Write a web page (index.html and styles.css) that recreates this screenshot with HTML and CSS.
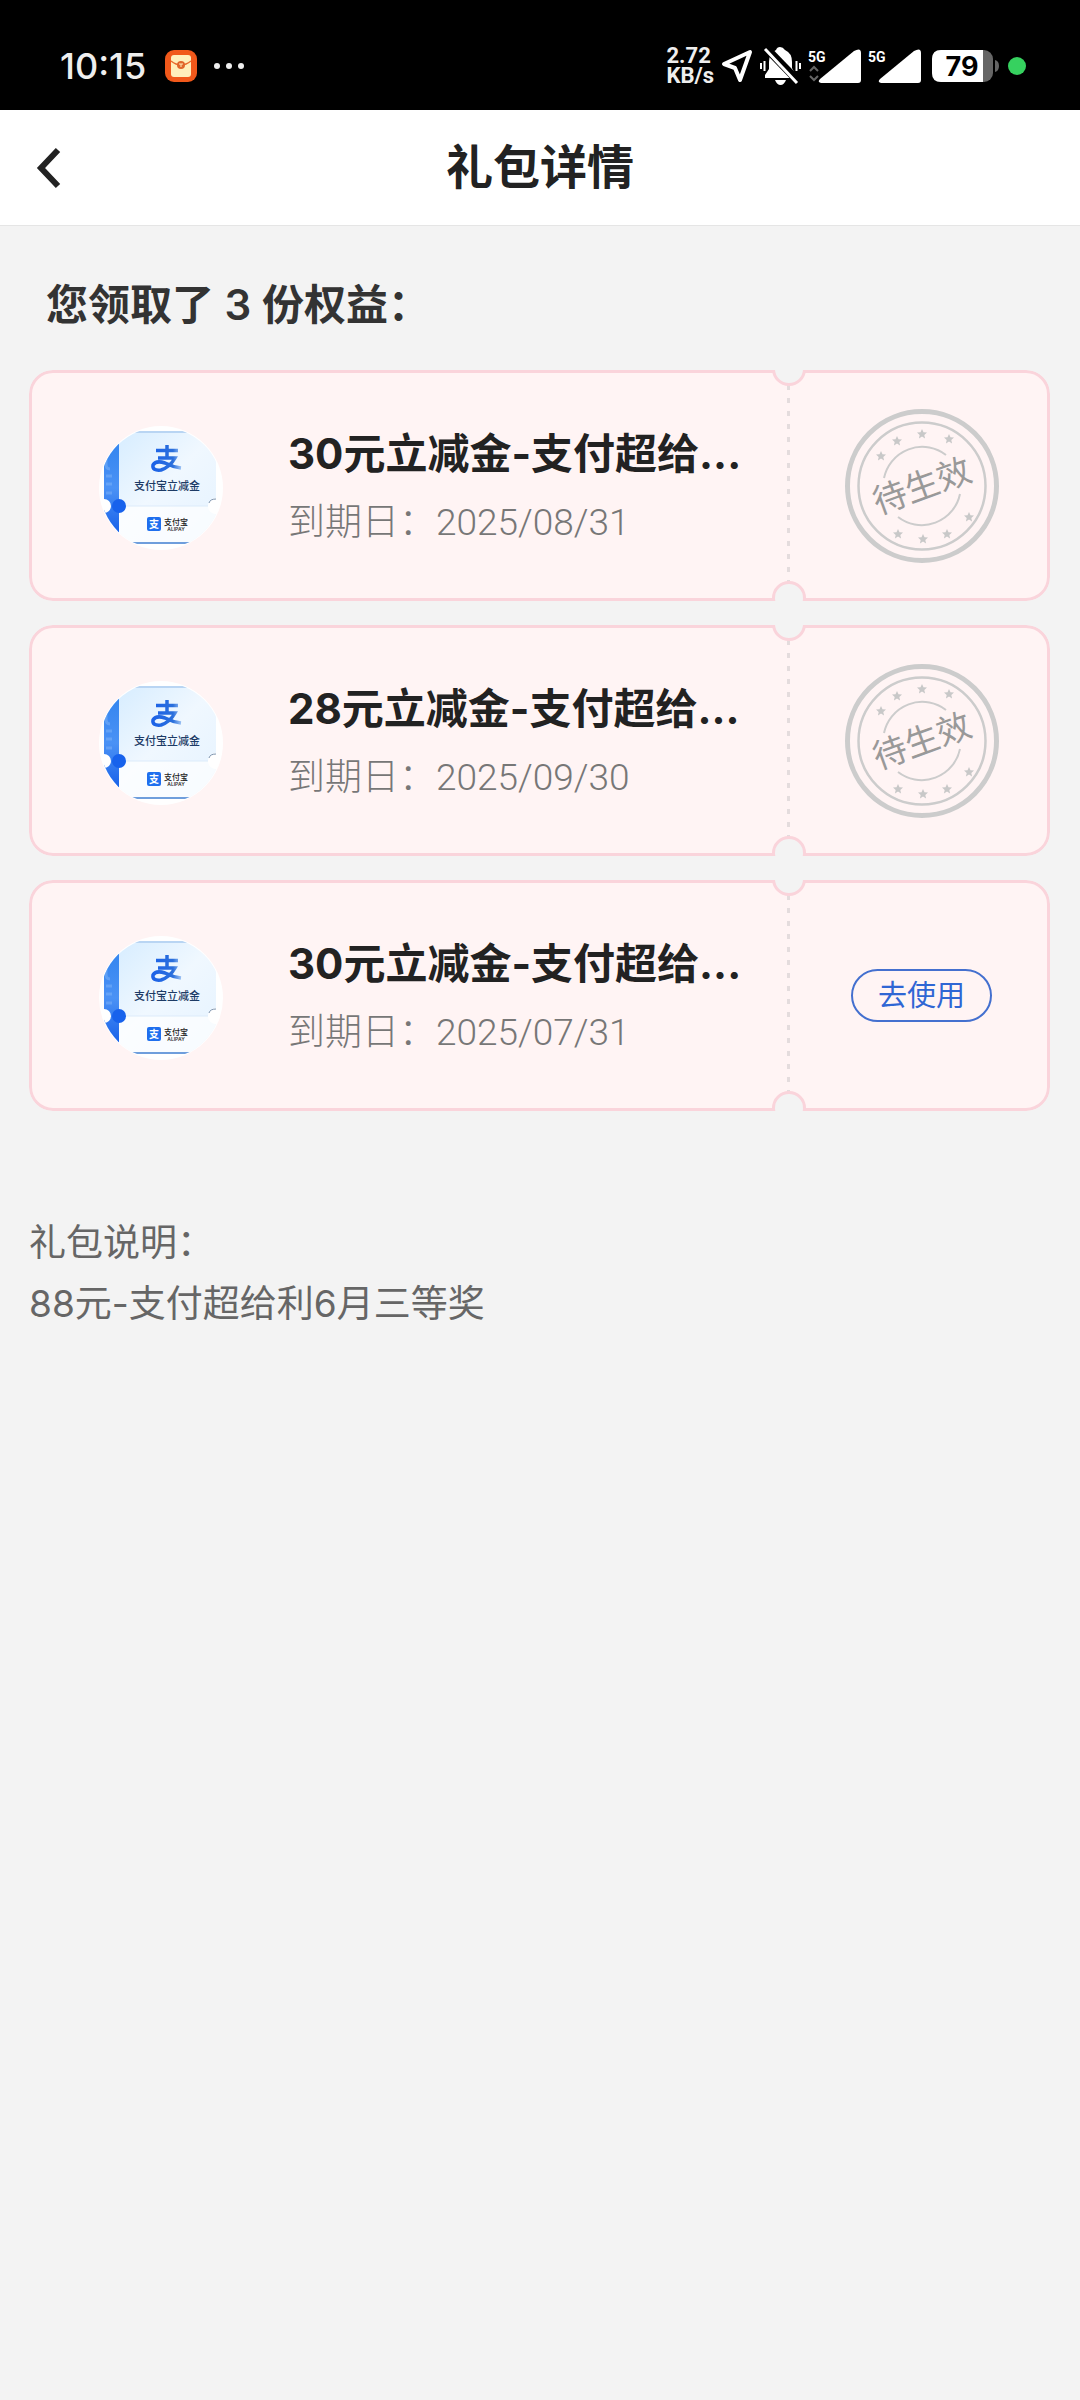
FILE: index.html
```html
<!DOCTYPE html>
<html lang="zh-CN">
<head>
  <meta charset="UTF-8">
  <meta name="viewport" content="width=device-width, initial-scale=1.0">
  <title>礼包详情</title>
  <link rel="stylesheet" href="styles.css">
</head>
<body>
  <!-- shared drawings -->
  <svg class="defs" width="0" height="0" aria-hidden="true">
    <defs>
      <linearGradient id="ticket-bg" x1="0" y1="0" x2="1" y2="1">
        <stop offset="0" stop-color="#d3ebff"/>
        <stop offset="0.5" stop-color="#f0f8ff"/>
        <stop offset="1" stop-color="#e4f2ff"/>
      </linearGradient>
      <linearGradient id="ticket-side" x1="0" y1="0" x2="0" y2="1">
        <stop offset="0" stop-color="#2f82ee"/>
        <stop offset="0.5" stop-color="#4a92f5"/>
        <stop offset="1" stop-color="#0d55e6"/>
      </linearGradient>
      <linearGradient id="zhi" gradientUnits="userSpaceOnUse" x1="53" y1="0" x2="83" y2="0">
        <stop offset="0" stop-color="#1c62e8"/>
        <stop offset="0.7" stop-color="#2a6fdc"/>
        <stop offset="1" stop-color="#a9cbf5"/>
      </linearGradient>
      <clipPath id="round"><circle cx="62" cy="62" r="61"/></clipPath>
      <path id="star" d="M0-5 1.5-1.8 5-1.5 2.3.9 3.1 4.5 0 2.6-3.1 4.5-2.3.9-5-1.5-1.5-1.8Z"/>

      <symbol id="coupon" viewBox="0 0 124 124">
        <circle cx="62" cy="62" r="62" fill="#fff"/>
        <g clip-path="url(#round)">
          <rect x="5" y="6" width="112" height="112" rx="3" fill="url(#ticket-bg)"/>
          <path d="M20 80H117V116H20Z" fill="#fff" opacity="0.7"/>
          <path d="M20 80H117" stroke="#dcebfa"/>
          <rect x="5" y="6" width="15" height="112" fill="url(#ticket-side)"/>
          <path d="M7 28v10q0 5 4 5M7 50h6M7 58h6M7 67h6M8 96v8h5" fill="none" stroke="#8fbdf9" stroke-width="3" opacity="0.4"/>
          <circle cx="5" cy="80" r="7" fill="#fff"/>
          <circle cx="20" cy="80" r="7" fill="#1762ec"/>
          <circle cx="117" cy="80" r="8" fill="#fff"/>
          <path d="M110 77Q111 73 117 73" fill="none" stroke="#7d93ad"/>
          <path d="M22 6H117" stroke="#b9d5f3" stroke-width="2"/>
          <path d="M30 117H117" stroke="#6f9edc" stroke-width="2"/>
        </g>
        <path d="M57 24.500H79M68 19V32M59 32H76Q71 41 62 44Q53 45 54 39Q57 34 66 37Q74 41 82 42" fill="none" stroke="url(#zhi)" stroke-width="3.500"/>
        <text class="coupon-name" x="68" y="64">支付宝立减金</text>
        <rect x="48" y="91" width="14" height="14" rx="2" fill="#1f6fee"/>
        <text class="coupon-mark" x="55" y="102">支</text>
        <text class="coupon-brand" x="77" y="99">支付宝</text>
        <text class="coupon-latin" x="77" y="105">ALIPAY</text>
      </symbol>

      <symbol id="stamp" viewBox="-77 -77 154 154">
        <g fill="none" stroke="#ccc">
          <circle r="74.500" stroke-width="5"/>
          <circle r="63.500" stroke-width="2.500"/>
          <path d="M-38-8A39 39 0 0 1 24-31M38 8A39 39 0 0 1-24 31" stroke-width="2"/>
        </g>
        <g fill="#c8c8c8">
          <use href="#star" x="-41" y="-30"/>
          <use href="#star" x="-25" y="-45"/>
          <use href="#star" x="0" y="-52"/>
          <use href="#star" x="27" y="-47"/>
          <use href="#star" x="47" y="31"/>
          <use href="#star" x="25" y="48"/>
          <use href="#star" x="1" y="53"/>
          <use href="#star" x="-24" y="48"/>
        </g>
        <text class="stamp-text" transform="rotate(-20)" x="0" y="12">待生效</text>
      </symbol>
    </defs>
  </svg>

  <div class="status-bar">
    <span class="time">10:15</span>
    <svg class="app-icon" width="32" height="32" viewBox="0 0 32 32">
      <rect width="32" height="32" rx="9" fill="#f1581a"/>
      <rect x="6" y="5" width="20" height="22" rx="3" fill="#ffeebb"/>
      <path d="M6 11Q16 19 26 11" fill="none" stroke="#e8692c" stroke-width="1.500"/>
      <circle cx="16" cy="15" r="4" fill="#e0652b"/>
      <path d="M14 14H18M16 14V17" stroke="#ffeebb"/>
    </svg>
    <svg class="more" width="32" height="8" viewBox="0 0 32 8" fill="#eee">
      <circle cx="4" cy="4" r="3"/><circle cx="16" cy="4" r="3"/><circle cx="28" cy="4" r="3"/>
    </svg>
    <div class="status-right">
      <div class="speed"><span>2.72</span><span>KB/s</span></div>
      <svg width="34" height="36" viewBox="0 0 34 36">
        <path d="M4 16 30 4 20 32 15 20Z" fill="none" stroke="#fff" stroke-width="4" stroke-linejoin="round"/>
      </svg>
      <svg width="42" height="38" viewBox="0 0 42 38">
        <path d="M16 3Q17 0 20 0T25 3Q32 6 32 15V21L36 29V31H5V28L9 22V15Q9 6 16 3Z" fill="#fff"/>
        <path d="M15 33H26Q24 38 20.500 38T15 33Z" fill="#fff"/>
        <path d="M1 16V22M4.500 14V24M36.500 14V24M40 16V22" stroke="#fff" stroke-width="2"/>
        <path d="M5 0 38 34" stroke="#000" stroke-width="8"/>
        <path d="M5 2 37 36" stroke="#fff" stroke-width="3"/>
      </svg>
      <svg width="54" height="36" viewBox="0 0 54 36">
        <text class="net" x="0" y="14">5G</text>
        <path d="M2 23 6 19 10 23M2 28 6 32 10 28" fill="none" stroke="#666" stroke-width="2"/>
        <path d="M12 31 46 3Q53-1 53 5V32Q53 35 50 35H13Q9 34 12 31Z" fill="#fff"/>
      </svg>
      <svg width="54" height="36" viewBox="0 0 54 36">
        <text class="net" x="0" y="14">5G</text>
        <path d="M12 31 46 3Q53-1 53 5V32Q53 35 50 35H13Q9 34 12 31Z" fill="#fff"/>
      </svg>
      <svg class="battery" width="67" height="32" viewBox="0 0 67 32">
        <rect width="61" height="32" rx="9" fill="#666"/>
        <path d="M9 0H51V32H9Q0 32 0 23V9Q0 0 9 0Z" fill="#fff"/>
        <path d="M63 10Q67 11 67 16T63 22Z" fill="#666"/>
        <text class="battery-text" x="30" y="26">79</text>
      </svg>
      <span class="dot"></span>
    </div>
  </div>

  <header class="header">
    <button class="back" aria-label="返回">
      <svg width="26" height="42" viewBox="0 0 26 42">
        <path d="M22 3 5 21 22 39" fill="none" stroke="#222" stroke-width="6"/>
      </svg>
    </button>
    <h1>礼包详情</h1>
  </header>

  <main class="content">
    <h2>您领取了 3 份权益：</h2>

    <div class="card">
      <svg class="avatar"><use href="#coupon"/></svg>
      <div class="info">
        <h3>30元立减金-支付超给...</h3>
        <p>到期日：<span class="date">2025/08/31</span></p>
      </div>
      <div class="action">
        <svg class="stamp"><use href="#stamp"/></svg>
      </div>
    </div>

    <div class="card">
      <svg class="avatar"><use href="#coupon"/></svg>
      <div class="info">
        <h3>28元立减金-支付超给...</h3>
        <p>到期日：<span class="date">2025/09/30</span></p>
      </div>
      <div class="action">
        <svg class="stamp"><use href="#stamp"/></svg>
      </div>
    </div>

    <div class="card">
      <svg class="avatar"><use href="#coupon"/></svg>
      <div class="info">
        <h3>30元立减金-支付超给...</h3>
        <p>到期日：<span class="date">2025/07/31</span></p>
      </div>
      <div class="action">
        <button class="use-btn">去使用</button>
      </div>
    </div>

    <div class="note">
      <p>礼包说明：</p>
      <p>88元-支付超给利6月三等奖</p>
    </div>
  </main>
</body>
</html>
```

FILE: styles.css
```css
* {
  box-sizing: border-box;
}
body {
  margin: 0;
  background: #f3f3f3;
  color: #222;
  font-family: Inter, "Noto Sans CJK SC", sans-serif;
}
h1, h2, h3, p {
  margin: 0;
}
button {
  font-family: inherit;
  cursor: pointer;
}
svg {
  display: block;
  flex-shrink: 0;
}
.defs {
  position: absolute;
}

/* status bar */
.status-bar {
  display: flex;
  align-items: center;
  height: 110px;
  padding: 22px 54px 0 60px;
  background: #000;
  color: #eee;
}
.time {
  font-size: 36px;
  font-weight: 500;
}
.app-icon {
  margin-left: 19px;
}
.more {
  margin-left: 16px;
}
.status-right {
  display: flex;
  align-items: center;
  gap: 6px;
  margin-left: auto;
}
.speed {
  display: grid;
  font: bold 22px/20px Roboto, sans-serif;
}
.net {
  font: bold 14px Roboto, sans-serif;
  fill: #fff;
}
.battery {
  margin-left: 4px;
}
.battery-text {
  font-size: 27px;
  font-weight: 700;
  text-anchor: middle;
}
.dot {
  width: 18px;
  height: 18px;
  margin-left: 3px;
  border-radius: 50%;
  background: #36d15f;
}

/* header */
.header {
  display: grid;
  grid-template-columns: 96px 1fr 96px;
  align-items: center;
  height: 116px;
  background: #fff;
  border-bottom: 1px solid #e5e5e5;
}
.header h1 {
  padding-bottom: 8px;
  font-size: 47px;
  font-weight: 700;
  text-align: center;
}
.back {
  padding: 0 0 0 36px;
  border: 0;
  background: none;
}

/* coupons */
.content {
  padding: 44px 30px 44px 29px;
}
.content h2 {
  margin-bottom: 30px;
  padding-left: 17px;
  color: #333;
  font-size: 42px;
  font-weight: 600;
  line-height: 70px;
}
.card {
  position: relative;
  display: flex;
  align-items: center;
  height: 231px;
  margin-bottom: 24px;
  padding-left: 67px;
  border: 3px solid #fad4db;
  border-radius: 24px;
  background: #fff4f4;
  clip-path: inset(0 round 24px);
}
.avatar {
  width: 124px;
  height: 124px;
  margin-top: 4px;
}
.info {
  flex: 1;
  min-width: 0;
  margin-left: 65px;
  padding-top: 5px;
  white-space: nowrap;
}
.info h3 {
  font-size: 42px;
  font-weight: 700;
  line-height: 68px;
}
.info p {
  color: #777;
  font-size: 37px;
  font-weight: 300;
  line-height: 68px;
}
.date {
  font-family: Roboto, sans-serif;
}
.action {
  position: relative;
  display: flex;
  align-items: center;
  justify-content: center;
  align-self: stretch;
  width: 260px;
  padding-left: 9px;
  background: repeating-linear-gradient(#e4dcdd 0 5px, transparent 5px 13px) 0 12px / 3px 100% no-repeat;
}
/* round cuts at both ends of the dashed line */
.action::before,
.action::after {
  content: "";
  position: absolute;
  left: -13px;
  width: 28px;
  height: 28px;
  border: 3px solid #fad4db;
  border-radius: 50%;
  background: #f3f3f3;
}
.action::before {
  top: -19px;
}
.action::after {
  bottom: -17px;
}
.action::before,
.action::after {
  margin: -2px 0 0 -2px;
}
.stamp {
  width: 154px;
  height: 154px;
}
.use-btn {
  width: 141px;
  height: 53px;
  padding: 0 0 5px;
  border: 2px solid #4470cf;
  border-radius: 27px;
  background: none;
  color: #2f66d4;
  font-size: 29px;
}
.note {
  margin-top: 101px;
  color: #666;
  font-size: 37px;
  line-height: 61px;
}

/* text inside drawings */
.coupon-name,
.coupon-mark,
.coupon-brand,
.coupon-latin,
.stamp-text {
  text-anchor: middle;
}
.coupon-name {
  font-size: 11px;
  font-weight: 500;
  fill: #1d3b66;
}
.coupon-mark {
  font-size: 10px;
  font-weight: 700;
  fill: #fff;
}
.coupon-brand {
  font-size: 8px;
  font-weight: 500;
  fill: #222;
}
.coupon-latin {
  font-size: 5px;
  font-weight: 600;
  fill: #333;
}
.stamp-text {
  font-size: 34px;
  fill: #999;
}
```
